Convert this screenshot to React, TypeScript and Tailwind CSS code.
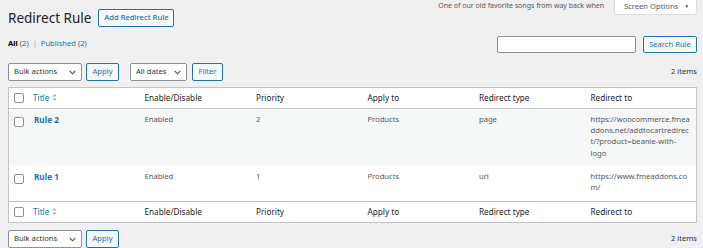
import React from "react";

const Check = () => (
  <div className="w-[10px] h-[10px] rounded-[2px] border border-[#8c8f94] bg-white" />
);

const SortIcon = () => (
  <svg width="5" height="9" viewBox="0 0 5 9" className="ml-[3px]">
    <path d="M0.5 3.5 L2.5 1 L4.5 3.5 Z" fill="#a7aaad" />
    <path d="M0.5 5.5 L2.5 8 L4.5 5.5 Z" fill="#a7aaad" />
  </svg>
);

const Chevron = () => (
  <svg width="7" height="5" viewBox="0 0 7 5">
    <path d="M0.8 1 L3.5 3.8 L6.2 1" fill="none" stroke="#50575e" strokeWidth="1.1" />
  </svg>
);

const Select = ({ label, w }: { label: string; w: string }) => (
  <div
    className={`${w} h-[18px] flex items-center justify-between pl-[5px] pr-[5px] bg-white border border-[#8c8f94] rounded-[2px] text-[7.6px] text-[#2c3338]`}
  >
    <span>{label}</span>
    <Chevron />
  </div>
);

const Btn = ({ label, w }: { label: string; w: string }) => (
  <div
    className={`${w} h-[18px] flex items-center justify-center bg-[#f6f7f7] border border-[#2271b1] rounded-[2px] text-[7.6px] text-[#2271b1]`}
  >
    {label}
  </div>
);

const cols = "grid grid-cols-[18px_repeat(6,1fr)]";

const HeaderRow = ({ top }: { top: boolean }) => (
  <div
    className={`${cols} h-[21px] items-center text-[8.2px] text-[#1d2327] ${
      top ? "border-b" : "border-t"
    } border-[#c3c4c7]`}
  >
    <div className="pl-[5px]">
      <Check />
    </div>
    <div className="pl-[6px] flex items-center text-[#2271b1]">
      Title
      <SortIcon />
    </div>
    <div className="pl-[6px]">Enable/Disable</div>
    <div className="pl-[6px]">Priority</div>
    <div className="pl-[6px]">Apply to</div>
    <div className="pl-[6px]">Redirect type</div>
    <div className="pl-[6px]">Redirect to</div>
  </div>
);

const DataRow = ({
  title,
  priority,
  type,
  lines,
  bg,
  h,
}: {
  title: string;
  priority: string;
  type: string;
  lines: string[];
  bg: string;
  h: string;
}) => (
  <div className={`${cols} ${bg} ${h} items-start text-[7.6px] leading-[11.4px] text-[#50575e]`}>
    <div className="pl-[5px] pt-[8px]">
      <Check />
    </div>
    <div className="pl-[7px] pt-[4.5px] text-[8.2px] font-bold text-[#2271b1]">{title}</div>
    <div className="pl-[6px] pt-[4.5px]">Enabled</div>
    <div className="pl-[6px] pt-[4.5px]">{priority}</div>
    <div className="pl-[6px] pt-[4.5px]">Products</div>
    <div className="pl-[6px] pt-[4.5px]">{type}</div>
    <div className="pl-[6px] pt-[4.5px]">
      {lines.map((l, i) => (
        <div key={i}>{l}</div>
      ))}
    </div>
  </div>
);

export default function App() {
  return (
    <div className="w-[703px] h-[248px] overflow-hidden bg-[#f0f0f1] font-['Noto_Sans',sans-serif] pl-[8px] pr-[6px]">
      {/* Top row */}
      <div className="flex justify-between items-start">
        <div className="flex items-center pt-[9px]">
          <h1 className="text-[13.5px] leading-[18px] text-[#1d2327]">Redirect Rule</h1>
          <div className="ml-[7px] w-[76px] h-[18px] flex items-center justify-center bg-[#f6f7f7] border border-[#2271b1] rounded-[2px] text-[7.6px] font-medium text-[#2271b1]">
            Add Redirect Rule
          </div>
        </div>
        <div className="flex items-start">
          <div className="text-[7px] leading-[12px] text-[#50575e] mr-[10px]">
            One of our old favorite songs from way back when
          </div>
          <div className="w-[83px] h-[16px] -mt-[1px] flex items-center bg-white border border-t-0 border-[#dcdcde] rounded-b-[3px] pl-[9px] text-[7.6px] text-[#50575e]">
            Screen Options
            <span className="ml-[6px] text-[5px]">▼</span>
          </div>
        </div>
      </div>

      {/* subsubsub + search */}
      <div className="flex justify-between items-start mt-[9px]">
        <div className="text-[7.6px] leading-[12px] pt-[1px] text-[#50575e]">
          <span className="font-bold text-[#000]">All</span> (2){" "}
          <span className="text-[#a7aaad] mx-[2px]">|</span>{" "}
          <span className="text-[#2271b1]">Published</span> (2)
        </div>
        <div className="flex items-center">
          <div className="w-[139px] h-[17px] bg-white border border-[#8c8f94] rounded-[2px]" />
          <div className="ml-[7px] w-[54px] h-[17px] flex items-center justify-center bg-[#f6f7f7] border border-[#2271b1] rounded-[2px] text-[7.6px] text-[#2271b1]">
            Search Rule
          </div>
        </div>
      </div>

      {/* tablenav top */}
      <div className="flex justify-between items-center mt-[10px] h-[18px]">
        <div className="flex items-center">
          <Select label="Bulk actions" w="w-[74px]" />
          <div className="ml-[4px]">
            <Btn label="Apply" w="w-[33px]" />
          </div>
          <div className="ml-[11px]">
            <Select label="All dates" w="w-[57px]" />
          </div>
          <div className="ml-[5px]">
            <Btn label="Filter" w="w-[31px]" />
          </div>
        </div>
        <div className="text-[7.6px] text-[#2c3338]">2 items</div>
      </div>

      {/* table */}
      <div className="mt-[6px] bg-white border border-[#c3c4c7]">
        <HeaderRow top={true} />
        <DataRow
          title="Rule 2"
          priority="2"
          type="page"
          lines={[
            "https://woocommerce.fmea",
            "ddons.net/addtocartredirec",
            "t/?product=beanie-with-",
            "logo",
          ]}
          bg="bg-[#f6f7f7]"
          h="h-[57px]"
        />
        <DataRow
          title="Rule 1"
          priority="1"
          type="url"
          lines={["https://www.fmeaddons.co", "m/"]}
          bg="bg-white"
          h="h-[35px]"
        />
        <HeaderRow top={false} />
      </div>

      {/* tablenav bottom */}
      <div className="flex justify-between items-center mt-[7px] h-[18px]">
        <div className="flex items-center">
          <Select label="Bulk actions" w="w-[74px]" />
          <div className="ml-[4px]">
            <Btn label="Apply" w="w-[33px]" />
          </div>
        </div>
        <div className="text-[7.6px] text-[#2c3338]">2 items</div>
      </div>
    </div>
  );
}
